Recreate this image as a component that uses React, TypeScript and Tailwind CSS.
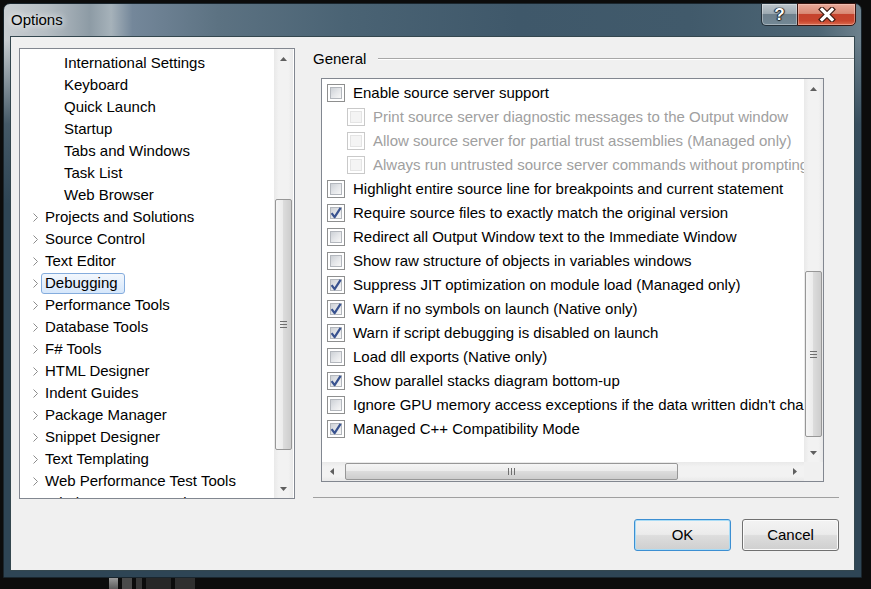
import React from 'react';
import clsx from 'clsx';

type TreeItem = { label: string; level: 1 | 2; selected?: boolean };

const TREE: TreeItem[] = [
  { label: 'International Settings', level: 2 },
  { label: 'Keyboard', level: 2 },
  { label: 'Quick Launch', level: 2 },
  { label: 'Startup', level: 2 },
  { label: 'Tabs and Windows', level: 2 },
  { label: 'Task List', level: 2 },
  { label: 'Web Browser', level: 2 },
  { label: 'Projects and Solutions', level: 1 },
  { label: 'Source Control', level: 1 },
  { label: 'Text Editor', level: 1 },
  { label: 'Debugging', level: 1, selected: true },
  { label: 'Performance Tools', level: 1 },
  { label: 'Database Tools', level: 1 },
  { label: 'F# Tools', level: 1 },
  { label: 'HTML Designer', level: 1 },
  { label: 'Indent Guides', level: 1 },
  { label: 'Package Manager', level: 1 },
  { label: 'Snippet Designer', level: 1 },
  { label: 'Text Templating', level: 1 },
  { label: 'Web Performance Test Tools', level: 1 },
  { label: 'Windows Forms Designer', level: 1 },
];

type Opt = { label: string; checked?: boolean; sub?: boolean };

const OPTIONS: Opt[] = [
  { label: 'Enable source server support' },
  { label: 'Print source server diagnostic messages to the Output window', sub: true },
  { label: 'Allow source server for partial trust assemblies (Managed only)', sub: true },
  { label: 'Always run untrusted source server commands without prompting', sub: true },
  { label: 'Highlight entire source line for breakpoints and current statement' },
  { label: 'Require source files to exactly match the original version', checked: true },
  { label: 'Redirect all Output Window text to the Immediate Window' },
  { label: 'Show raw structure of objects in variables windows' },
  { label: 'Suppress JIT optimization on module load (Managed only)', checked: true },
  { label: 'Warn if no symbols on launch (Native only)', checked: true },
  { label: 'Warn if script debugging is disabled on launch', checked: true },
  { label: 'Load dll exports (Native only)' },
  { label: 'Show parallel stacks diagram bottom-up', checked: true },
  { label: "Ignore GPU memory access exceptions if the data written didn't change" },
  { label: 'Managed C++ Compatibility Mode', checked: true },
];

function Arrow({ dir }: { dir: 'up' | 'down' | 'left' | 'right' }) {
  const horiz = dir === 'left' || dir === 'right';
  const pts = {
    up: '0,4 3.5,0 7,4',
    down: '0,0 7,0 3.5,4',
    left: '4,0 4,7 0,3.5',
    right: '0,0 4,3.5 0,7',
  }[dir];
  return (
    <svg width={horiz ? 4 : 7} height={horiz ? 7 : 4} viewBox={horiz ? '0 0 4 7' : '0 0 7 4'}>
      <polygon points={pts} fill="#5f5f5f" />
    </svg>
  );
}

function VScroll({ thumbTop, thumbHeight }: { thumbTop: number; thumbHeight: number }) {
  return (
    <div className="w-[19px] h-full flex flex-col bg-[linear-gradient(to_right,#e9e9e9,#f2f2f2_25%,#f2f2f2_75%,#e9e9e9)]">
      <div className="h-[19px] flex items-center justify-center flex-shrink-0">
        <Arrow dir="up" />
      </div>
      <div className="flex-shrink-0" style={{ height: thumbTop - 19 }} />
      <div
        className="flex-shrink-0 mx-[1px] rounded-[2px] border border-[#979797] bg-[linear-gradient(to_right,#f5f5f5_0%,#ececec_45%,#dcdcdc_50%,#cdcdcd_100%)] flex flex-col items-center justify-center gap-[2px]"
        style={{ height: thumbHeight }}
      >
        <div className="w-[7px] h-px bg-[#6f6f6f]" />
        <div className="w-[7px] h-px bg-[#6f6f6f]" />
        <div className="w-[7px] h-px bg-[#6f6f6f]" />
      </div>
      <div className="flex-1" />
      <div className="h-[19px] flex items-center justify-center flex-shrink-0">
        <Arrow dir="down" />
      </div>
    </div>
  );
}

function HScroll({ thumbLeft, thumbWidth }: { thumbLeft: number; thumbWidth: number }) {
  return (
    <div className="h-[19px] flex-1 flex bg-[linear-gradient(to_bottom,#e9e9e9,#f2f2f2_25%,#f2f2f2_75%,#e9e9e9)]">
      <div className="w-[19px] flex items-center justify-center flex-shrink-0">
        <Arrow dir="left" />
      </div>
      <div className="flex-shrink-0" style={{ width: thumbLeft - 19 }} />
      <div
        className="flex-shrink-0 my-[1px] rounded-[2px] border border-[#979797] bg-[linear-gradient(to_bottom,#f5f5f5_0%,#ececec_45%,#dcdcdc_50%,#cdcdcd_100%)] flex items-center justify-center gap-[2px]"
        style={{ width: thumbWidth }}
      >
        <div className="h-[7px] w-px bg-[#6f6f6f]" />
        <div className="h-[7px] w-px bg-[#6f6f6f]" />
        <div className="h-[7px] w-px bg-[#6f6f6f]" />
      </div>
      <div className="flex-1" />
      <div className="w-[19px] flex items-center justify-center flex-shrink-0">
        <Arrow dir="right" />
      </div>
    </div>
  );
}

function CheckBox({ checked, disabled }: { checked?: boolean; disabled?: boolean }) {
  return (
    <div
      className={clsx(
        'relative w-[18px] h-[18px] border p-[2px] bg-white flex-shrink-0',
        disabled ? 'border-[#c9c9c9]' : 'border-[#8e8f8f]'
      )}
    >
      <div
        className={clsx(
          'w-full h-full border',
          disabled
            ? 'border-[#e4e4e4] bg-[#f4f4f4]'
            : 'border-[#b3b7bd] bg-[linear-gradient(135deg,#cdd1d6_0%,#e4e6e9_50%,#f7f7f7_100%)]'
        )}
      />
      {checked && (
        <svg className="absolute left-[-1px] top-[-1px]" width="18" height="18" viewBox="0 0 18 18">
          <path d="M4.6 9.2 L7.6 13.2 L13.6 3.8" fill="none" stroke="#38528f" strokeWidth="2.2" strokeLinejoin="round" />
        </svg>
      )}
    </div>
  );
}

function Chevron() {
  return (
    <svg width="5" height="9" viewBox="0 0 5 9" className="flex-shrink-0">
      <polyline points="0.5,0.5 4.5,4.5 0.5,8.5" fill="none" stroke="#8c8c8c" strokeWidth="1" />
    </svg>
  );
}

function Button({ label, primary }: { label: string; primary?: boolean }) {
  return (
    <div
      className={clsx(
        'w-[97px] h-[32px] pt-[1px] rounded-[3px] border flex items-center justify-center bg-[linear-gradient(to_bottom,#f3f3f3_0%,#ebebeb_48%,#dddddd_52%,#cfcfcf_100%)]',
        primary
          ? 'border-[#3c8fd2] shadow-[inset_0_0_0_1px_#a9dcf6]'
          : 'border-[#707070] shadow-[inset_0_0_0_1px_#fbfbfb]'
      )}
    >
      {label}
    </div>
  );
}

export default function App() {
  return (
    <div className="w-[871px] h-[589px] bg-[#0c0c0c] overflow-hidden font-['Liberation_Sans',Arial,sans-serif] text-[15px] text-black">
      <div className="h-[3px]" />
      {/* Window */}
      <div className="ml-[3px] w-[859px] h-[575px] rounded-t-[7px] border border-[#1a262e] flex flex-col bg-[linear-gradient(to_bottom,rgba(46,69,85,0)_0px,rgba(46,69,85,0)_36px,rgba(46,69,85,0.85)_120px,#2e4555_200px),linear-gradient(to_right,#c9ced2_0%,#b5bdc3_5%,#8d9ba5_10%,#a6b2ba_12.5%,#74879a_15%,#5c7282_25%,#4a6374_40%,#3f586a_60%,#415a6b_80%,#4d6574_95%,#6d818d_100%)]">
        {/* Title bar */}
        <div className="h-[32px] flex justify-between flex-shrink-0">
          <span className="pl-[7px] pt-[1px] self-center text-[15px] [text-shadow:0_0_6px_rgba(255,255,255,0.9),0_0_10px_rgba(255,255,255,0.6)]">
            Options
          </span>
          <div className="flex self-start -mt-[1px] mr-[5px] h-[23px]">
            <div className="w-[36px] h-full rounded-bl-[5px] border border-[#25323b] border-r-0 bg-[linear-gradient(to_bottom,#bcc6cc_0%,#9eabb3_45%,#6e808c_50%,#738895_100%)] shadow-[inset_0_0_0_1px_rgba(255,255,255,0.35)] flex items-center justify-center">
              <span className="font-bold text-[17px] text-white leading-none [text-shadow:0_0_1px_#1d2328,0_0_1px_#1d2328,0_1px_1px_#1d2328,1px_0_1px_#1d2328,-1px_0_1px_#1d2328]">
                ?
              </span>
            </div>
            <div className="w-[59px] h-full rounded-br-[5px] border border-[#3a1610] bg-[linear-gradient(to_bottom,#e9aa9a_0%,#d98a75_45%,#c5432d_50%,#c8452d_80%,#db6b4f_100%)] shadow-[inset_0_0_0_1px_rgba(255,220,210,0.4)] flex items-center justify-center">
              <svg width="20" height="15" viewBox="0 0 20 15">
                <path d="M5 2.5 L15 12.5 M15 2.5 L5 12.5" stroke="#3b1a12" strokeWidth="5.5" strokeLinecap="square" />
                <path d="M5 2.5 L15 12.5 M15 2.5 L5 12.5" stroke="#ffffff" strokeWidth="3.2" strokeLinecap="square" />
              </svg>
            </div>
          </div>
        </div>

        {/* Client area */}
        <div className="mx-[6px] h-[535px] border border-[#34474f] bg-[#f0f0f0] flex flex-col flex-shrink-0">
          <div className="flex pl-[8px] pt-[11px] h-[462px] flex-shrink-0">
            {/* Tree */}
            <div className="w-[276px] h-[451px] border border-[#828790] bg-white flex flex-shrink-0">
              <div className="flex-1 overflow-hidden pt-[3px]">
                {TREE.map(item => (
                  <div
                    key={item.label}
                    className={clsx('h-[22px] flex items-center whitespace-nowrap', item.level === 1 ? 'pl-[13px]' : 'pl-[40px]')}
                  >
                    {item.level === 1 && <Chevron />}
                    <span
                      className={clsx(
                        'h-[21px] flex items-center pl-[3px] pr-[6px] border rounded-[3px]',
                        item.level === 1 && 'ml-[3px]',
                        item.selected
                          ? 'border-[#84acdd] bg-[linear-gradient(to_bottom,#f2f7fd,#d6e7fb)]'
                          : 'border-transparent'
                      )}
                    >
                      {item.label}
                    </span>
                  </div>
                ))}
              </div>
              <div className="mr-[1px]">
                <VScroll thumbTop={150} thumbHeight={251} />
              </div>
            </div>

            {/* Right panel */}
            <div className="ml-[18px] flex-1 flex flex-col">
              <div className="h-[22px] pt-[1px] flex items-center gap-[12px]">
                <span>General</span>
                <div className="flex-1 h-[2px] -mt-[1px] border-t border-[#a7a7a7] border-b border-b-white" />
              </div>
              <div className="ml-[8px] mt-[8px] w-[503px] h-[404px] border border-[#828790] bg-white flex flex-col">
                <div className="flex h-[383px]">
                  <div className="w-[482px] overflow-hidden pt-[2px]">
                    {OPTIONS.map(opt => (
                      <div
                        key={opt.label}
                        className={clsx('h-[24px] flex items-center gap-[8px] whitespace-nowrap', opt.sub ? 'pl-[25px]' : 'pl-[5px]')}
                      >
                        <CheckBox checked={opt.checked} disabled={opt.sub} />
                        <span className={opt.sub ? 'text-[#a0a0a0]' : ''}>{opt.label}</span>
                      </div>
                    ))}
                  </div>
                  <VScroll thumbTop={192} thumbHeight={166} />
                </div>
                <div className="flex">
                  <HScroll thumbLeft={23} thumbWidth={333} />
                  <div className="w-[19px] h-[19px] bg-[#f0f0f0]" />
                </div>
              </div>
              <div className="mt-[15px] w-[526px] h-px bg-[#a0a0a0]" />
            </div>
          </div>

          {/* Buttons */}
          <div className="mt-[20px] flex justify-end gap-[11px] pr-[15px]">
            <Button label="OK" primary />
            <Button label="Cancel" />
          </div>
        </div>
      </div>

      {/* Background below the window */}
      <div className="flex h-[11px] ml-[109px] gap-[4px]">
        <div className="w-[9px] bg-[linear-gradient(to_bottom,#9a9a9a,#5a5a5a)]" />
        <div className="w-[10px] bg-[#4a4a4a]" />
        <div className="w-[6px] bg-[#383838]" />
        <div className="w-[25px] bg-[#272727]" />
        <div className="w-[20px] bg-[#2f2f2f]" />
      </div>
    </div>
  );
}
